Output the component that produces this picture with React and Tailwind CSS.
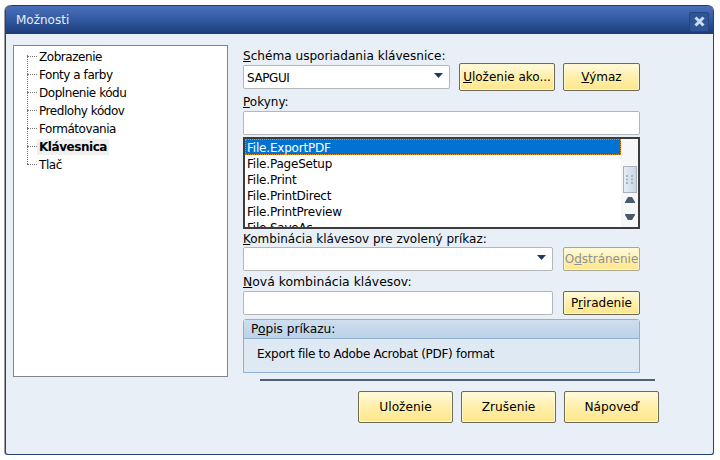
const font = { fontFamily: '"DejaVu Sans", sans-serif' };

const treeItems = ['Zobrazenie', 'Fonty a farby', 'Doplnenie kódu', 'Predlohy kódov', 'Formátovania', 'Klávesnica', 'Tlač'];
const commands = ['File.ExportPDF', 'File.PageSetup', 'File.Print', 'File.PrintDirect', 'File.PrintPreview', 'File.SaveAs'];

const Btn = ({ children, className = '', disabled }) => (
  <button className={`flex items-center justify-center rounded-[2px] border bg-gradient-to-b from-[#fffbe0] via-[#ffefa8] to-[#ffe68c] shadow-[inset_0_0_0_1px_#fff8d0] ${disabled ? 'border-[#a9a88f] text-[#8d9298]' : 'border-[#6f6a55] text-black'} ${className}`}>
    {children}
  </button>
);

const Arrow = () => (
  <svg width="9" height="5" viewBox="0 0 9 5" className="absolute right-[6px] top-[7px]">
    <path d="M0 0h9L4.500 5z" fill="#1f3864" />
  </svg>
);

const Field = ({ className = '', children }) => (
  <div className={`relative flex h-[24px] items-center rounded-[2px] border border-[#b4b7b9] bg-white px-[3px] ${className}`}>{children}</div>
);

export default function App() {
  return (
    <div className="h-[460px] w-[720px] overflow-hidden bg-white pl-[5px] pt-[5px] text-[12px] leading-[16px] text-black" style={font}>
      <div className="flex h-[450px] w-[709px] flex-col rounded-t-[6px] rounded-b-[3px] border-x border-b border-x-[#24417a] border-b-[#24417a] bg-[#e8eff7] shadow-[-1px_0_0_#a0a0a0]">
        <div className="flex h-[29px] shrink-0 items-center justify-between rounded-t-[6px] border-t border-[#1d3b7a] bg-gradient-to-b from-[#4a70bd] via-[#31599f] to-[#1d3b7a] pl-[10px] pr-[4px]">
          <span className="text-[12px] text-[#e6edf8]">Možnosti</span>
          <div className="mt-[3px] flex h-[20px] w-[20px] items-center justify-center rounded-[2px] border border-[#24457f] bg-[#2f5597]">
            <svg width="11" height="11" viewBox="0 0 11 11">
              <path d="M1.500 1.500l8 8M9.500 1.500l-8 8" stroke="#c9defa" strokeWidth="3" />
            </svg>
          </div>
        </div>

        <div className="flex pl-[7px] pt-[11px]">
          <div className="relative h-[332px] w-[215px] shrink-0 border border-[#80868c] bg-white pl-[25px] pt-[2px] tracking-[-0.45px]">
            <div className="absolute left-[13px] top-[9px] h-[109px] border-l border-dotted border-[#777]" />
            {treeItems.map(t => (
              <div key={t} className="relative h-[18px] leading-[18px]">
                <div className="absolute left-[-12px] top-[8px] w-[10px] border-t border-dotted border-[#777]" />
                <span className={t === 'Klávesnica' ? 'ml-[-2px] bg-[#f0f0f0] px-[2px] py-[1px] font-bold' : ''}>{t}</span>
              </div>
            ))}
          </div>

          <div className="ml-[15px] w-[416px]">
            <div className="mt-[3px] h-[15px] w-[397px] text-[12.1px] leading-[16px]"><u>S</u>chéma usporiadania klávesnice:</div>
            <div className="flex h-[28px] w-[397px] items-center">
              <Field className="w-[207px] pt-[1px] tracking-[-0.4px]">SAPGUI<Arrow /></Field>
              <Btn className="ml-[9px] h-[28px] w-[96px]"><span><u>U</u>loženie ako...</span></Btn>
              <Btn className="ml-[8px] h-[28px] w-[77px]"><span><u>V</u>ýmaz</span></Btn>
            </div>
            <div className="mt-[3px] h-[16px] leading-[16px]"><u>P</u>okyny:</div>
            <Field className="mt-[1px] w-[397px]" />
            <div className="relative mt-[2px] h-[92px] w-[397px] overflow-hidden border-2 border-[#3c3c3c] bg-white tracking-[-0.2px]">
              {commands.map((c, i) => (
                <div key={c} className={`h-[16px] pl-[2px] leading-[18px] ${i === 0 ? 'mr-[17px] bg-[#0072d2] text-white outline-1 -outline-offset-1 outline-dotted outline-[#e58a2b]' : ''}`}>{c}</div>
              ))}
              <div className="absolute right-0 top-0 flex h-full w-[17px] flex-col items-center bg-[#f5f7f9]">
                <div className="mt-[27px] flex h-[27px] w-[14px] items-center justify-center border border-[#a9b2bc] bg-gradient-to-r from-[#e6edf4] to-[#c8d7e6]">
                  <svg width="7" height="9" viewBox="0 0 7 9"><path d="M0 0h2v2H0zM5 0h2v2H5zM0 3.500h2v2H0zM5 3.500h2v2H5zM0 7h2v2H0zM5 7h2v2H5z" fill="#aab4be" /></svg>
                </div>
                <svg width="10" height="6" viewBox="0 0 10 6" className="mt-[4px]"><path d="M3 0h4l3 5v1H0V5z" fill="#4a5a6a" /></svg>
                <svg width="10" height="6" viewBox="0 0 10 6" className="mt-[11px]"><path d="M0 0h10v1L7 6H3L0 1z" fill="#4a5a6a" /></svg>
              </div>
            </div>
            <div className="mt-[2px] h-[16px] leading-[16px]"><u>K</u>ombinácia klávesov pre zvolený príkaz:</div>
            <div className="flex h-[24px] w-[397px] items-center">
              <Field className="w-[310px]"><Arrow /></Field>
              <Btn disabled className="ml-[10px] h-[24px] w-[77px]"><span>O<u>d</u>stránenie</span></Btn>
            </div>
            <div className="mt-[3px] h-[16px] text-[12.4px] leading-[16px]"><u>N</u>ová kombinácia klávesov:</div>
            <div className="mt-[1px] flex h-[24px] w-[397px] items-center">
              <Field className="w-[310px]" />
              <Btn className="ml-[10px] h-[24px] w-[77px]"><span>P<u>r</u>iradenie</span></Btn>
            </div>
            <div className="mt-[4px] h-[54px] w-[397px] rounded-t-[3px] border border-[#92b0d0] bg-[#dee9f4]">
              <div className="h-[19px] border-b border-[#92b0d0] bg-gradient-to-b from-[#cfdeee] to-[#bcd2e8] pl-[7px] text-[12.2px] leading-[18px]">P<u>o</u>pis príkazu:</div>
              <div className="pl-[13px] pt-[7px] tracking-[-0.3px]">Export file to Adobe Acrobat (PDF) format</div>
            </div>
            <div className="ml-[17px] mt-[6px] h-[2px] w-[395px] bg-[#4d6278]" />
            <div className="ml-[115px] mt-[10px] flex gap-[8px] text-[12.2px]">
              <Btn className="h-[32px] w-[95px]">Uloženie</Btn>
              <Btn className="h-[32px] w-[95px]">Zrušenie</Btn>
              <Btn className="h-[32px] w-[95px]">Nápoveď</Btn>
            </div>
          </div>
        </div>
      </div>
    </div>
  );
}
